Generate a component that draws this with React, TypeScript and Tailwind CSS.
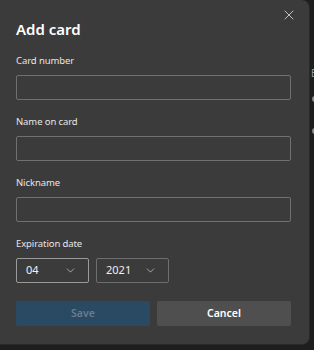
import { X, ChevronDown } from "lucide-react";

const font = { fontFamily: '"Noto Sans", "Open Sans", sans-serif' };

function Label({ text }: { text: string }) {
  return (
    <label className="block h-[12px] text-[9.5px] leading-[12px] tracking-[-0.1px] text-[#e6e6e6]">{text}</label>
  );
}

function Field({ label }: { label: string }) {
  return (
    <div className="flex flex-col">
      <Label text={label} />
      <div className="mt-[8px] h-[25px] w-[275px] rounded-[2px] border border-[#707070] bg-[#3b3b3b]" />
    </div>
  );
}

function Select({ value, active }: { value: string; active?: boolean }) {
  return (
    <div
      className={
        "flex h-[25px] w-[73px] items-center justify-between rounded-[2px] border pl-[9px] pr-[11px] text-[11px] text-[#f0f0f0] " +
        (active ? "border-[#9a9a9a]" : "border-[#6e6e6e]")
      }
    >
      <span>{value}</span>
      <ChevronDown size={13} strokeWidth={1.4} className="text-[#c8c8c8]" />
    </div>
  );
}

export default function App() {
  return (
    <div className="flex h-[350px] w-[314px] overflow-hidden bg-[#1e1e1e]" style={font}>
      <div className="relative flex h-[345px] w-[310px] shrink-0 flex-col rounded-r-lg border-r border-b border-[#2a2a2a] bg-[#3b3b3b] pl-[16px]">
        <button className="absolute right-[12px] top-[7px] text-[#d8d8d8]">
          <X size={16} strokeWidth={1.3} />
        </button>
        <h1 className="mt-[19px] h-[20px] text-[15px] font-semibold leading-[20px] text-white">Add card</h1>
        <div className="mt-[16px] flex flex-col gap-[16px]">
          <Field label="Card number" />
          <Field label="Name on card" />
          <Field label="Nickname" />
        </div>
        <div className="mt-[16px] flex flex-col">
          <Label text="Expiration date" />
          <div className="mt-[8px] flex gap-[7px]">
            <Select value="04" active />
            <Select value="2021" />
          </div>
        </div>
        <div className="mt-[18px] flex gap-[7px]">
          <button className="h-[25px] w-[134px] rounded-[2px] bg-[#2a4a64] text-[10.5px] font-semibold text-[#687c8e]">
            Save
          </button>
          <button className="h-[25px] w-[134px] rounded-[2px] bg-[#4f4f4f] text-[10.5px] font-semibold text-white">
            Cancel
          </button>
        </div>
      </div>
      <div className="flex flex-col pl-[1px] pt-[68px] text-[10px] leading-none text-[#9a9a9a]">
        <span className="h-[28px]">E</span>
        <span className="ml-[1px] h-[6px] w-[6px] rounded-full bg-[#8a8a8a]" />
        <span className="ml-[1px] mt-[26px] h-[6px] w-[6px] rounded-full bg-[#8a8a8a]" />
      </div>
    </div>
  );
}
